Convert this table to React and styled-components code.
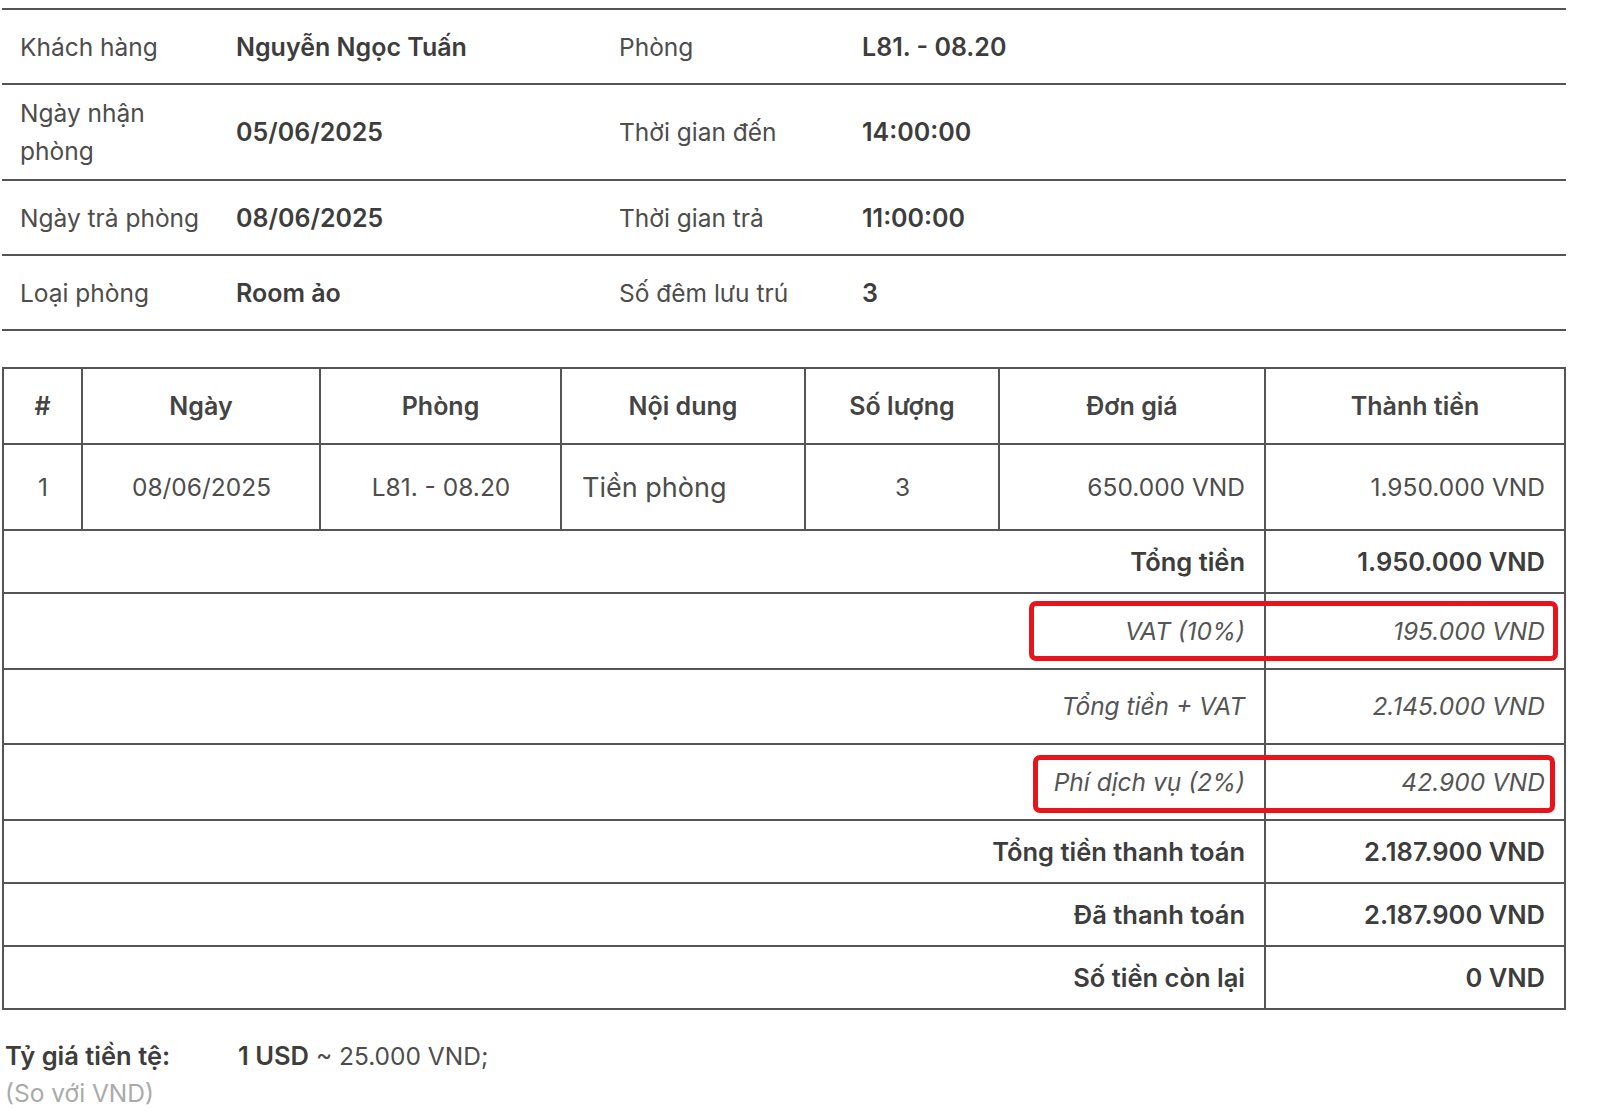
import React from "react";
import styled, { createGlobalStyle } from "styled-components";

const GlobalStyle = createGlobalStyle`
  body {
    margin: 0;
    background: #fff;
    font-family: Inter, "Noto Sans", "Liberation Sans", sans-serif;
    color: #4a4a4a;
  }
`;

const Page = styled.div`
  width: 1564px;
  margin-left: 2px;
  padding-top: 8px;
`;

const InfoTable = styled.table`
  width: 100%;
  border-collapse: collapse;
  table-layout: fixed;
  border-top: 2px solid #555;
  font-size: 24.5px;
`;

const InfoRow = styled.tr`
  border-bottom: 2px solid #555;
  height: 75px;
`;

const InfoCell = styled.td`
  padding: 9px 10px 9px 18px;
  line-height: 38px;
  vertical-align: middle;
  font-weight: ${(p) => (p.$value ? 600 : 400)};
  font-size: ${(p) => (p.$value ? "25px" : "24.5px")};
  color: ${(p) => (p.$value ? "#3d3d3d" : "#4d4d4d")};
`;

const TableWrap = styled.div`
  position: relative;
  margin-top: 36px;
`;

const Bill = styled.table`
  width: 100%;
  border-collapse: collapse;
  table-layout: fixed;
  font-size: 24.5px;
  color: #4d4d4d;

  td,
  th {
    border: 2px solid #555;
  }
`;

const HeadCell = styled.th`
  font-weight: 600;
  font-size: 25px;
  color: #444;
  text-align: center;
  height: 74px;
  padding: 0;
`;

const Cell = styled.td`
  height: 84px;
  padding: 0 19px 0 20px;
  text-align: ${(p) => p.$align || "center"};
  font-size: ${(p) => (p.$big ? "27px" : "24.5px")};
`;

const SumRow = styled.tr`
  height: ${(p) => (p.$italic ? "75.5px" : "63px")};
  font-style: ${(p) => (p.$italic ? "italic" : "normal")};
  font-weight: ${(p) => (p.$italic ? 400 : 600)};
  font-size: ${(p) => (p.$italic ? "24.5px" : "25.5px")};
  color: ${(p) => (p.$italic ? "#555" : "#3d3d3d")};
`;

const SumCell = styled.td`
  padding: 0 19px 0 20px;
  text-align: right;
`;

const Highlight = styled.div`
  position: absolute;
  border: 5px solid #e8141c;
  border-radius: 7px;
  box-sizing: border-box;
  pointer-events: none;
`;

const Footer = styled.div`
  display: grid;
  grid-template-columns: 233px 1fr;
  margin-top: 27px;
  margin-left: 3px;
  font-size: 24.5px;
  line-height: 37px;
`;

const FooterLabel = styled.div`
  font-weight: 600;
  font-size: 25.5px;
  color: #3d3d3d;
`;

const FooterValue = styled.div`
  color: #4d4d4d;

  b {
    font-weight: 600;
    font-size: 25.5px;
    color: #3d3d3d;
  }
`;

const FooterNote = styled.div`
  color: #aaa;
`;

const info = [
  ["Khách hàng", "Nguyễn Ngọc Tuấn", "Phòng", "L81. - 08.20"],
  ["Ngày nhận phòng", "05/06/2025", "Thời gian đến", "14:00:00"],
  ["Ngày trả phòng", "08/06/2025", "Thời gian trả", "11:00:00"],
  ["Loại phòng", "Room ảo", "Số đêm lưu trú", "3"],
];

const summary = [
  ["Tổng tiền", "1.950.000 VND"],
  ["VAT (10%)", "195.000 VND", true],
  ["Tổng tiền + VAT", "2.145.000 VND", true],
  ["Phí dịch vụ (2%)", "42.900 VND", true],
  ["Tổng tiền thanh toán", "2.187.900 VND"],
  ["Đã thanh toán", "2.187.900 VND"],
  ["Số tiền còn lại", "0 VND"],
];

export default function App() {
  return (
    <Page>
      <GlobalStyle />
      <InfoTable>
        <colgroup>
          <col style={{ width: 216 }} />
          <col style={{ width: 383 }} />
          <col style={{ width: 243 }} />
          <col />
        </colgroup>
        <tbody>
          {info.map(([l1, v1, l2, v2]) => (
            <InfoRow key={l1}>
              <InfoCell>{l1}</InfoCell>
              <InfoCell $value>{v1}</InfoCell>
              <InfoCell>{l2}</InfoCell>
              <InfoCell $value>{v2}</InfoCell>
            </InfoRow>
          ))}
        </tbody>
      </InfoTable>

      <TableWrap>
        <Bill>
          <colgroup>
            <col style={{ width: 79 }} />
            <col style={{ width: 238 }} />
            <col style={{ width: 241 }} />
            <col style={{ width: 244 }} />
            <col style={{ width: 194 }} />
            <col style={{ width: 266 }} />
            <col />
          </colgroup>
          <thead>
            <tr>
              <HeadCell>#</HeadCell>
              <HeadCell>Ngày</HeadCell>
              <HeadCell>Phòng</HeadCell>
              <HeadCell>Nội dung</HeadCell>
              <HeadCell>Số lượng</HeadCell>
              <HeadCell>Đơn giá</HeadCell>
              <HeadCell>Thành tiền</HeadCell>
            </tr>
          </thead>
          <tbody>
            <tr>
              <Cell>1</Cell>
              <Cell>08/06/2025</Cell>
              <Cell>L81. - 08.20</Cell>
              <Cell $align="left" $big>
                Tiền phòng
              </Cell>
              <Cell>3</Cell>
              <Cell $align="right">650.000 VND</Cell>
              <Cell $align="right">1.950.000 VND</Cell>
            </tr>
            {summary.map(([label, value, italic]) => (
              <SumRow key={label} $italic={italic}>
                <SumCell colSpan={6}>{label}</SumCell>
                <SumCell>{value}</SumCell>
              </SumRow>
            ))}
          </tbody>
        </Bill>
        <Highlight style={{ left: 1027, top: 234, width: 529, height: 60 }} />
        <Highlight style={{ left: 1031, top: 388, width: 522, height: 58 }} />
      </TableWrap>

      <Footer>
        <FooterLabel>Tỷ giá tiền tệ:</FooterLabel>
        <FooterValue>
          <b>1 USD</b> ~ 25.000 VND;
        </FooterValue>
        <FooterNote>(So với VND)</FooterNote>
      </Footer>
    </Page>
  );
}
